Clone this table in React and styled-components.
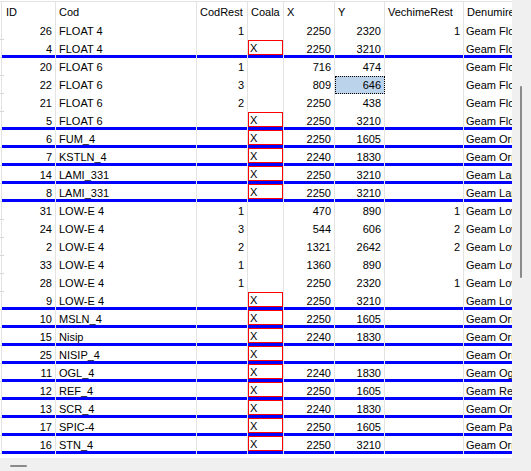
import React from 'react';
import styled, { createGlobalStyle } from 'styled-components';

const Global = createGlobalStyle`
  html, body { margin: 0; padding: 0; background: #fff; }
  body {
    font-family: "Liberation Sans", Arial, sans-serif;
    font-size: 11px;
    color: #000;
  }
`;

const COLS = '54px 141px 51px 36px 51px 50px 79px 70px';
const GRID = '#e3e3e3';

const Frame = styled.div`
  width: 531px;
  height: 471px;
  display: grid;
  grid-template-columns: 512px 19px;
  grid-template-rows: 458px 13px;
  background: #fff;
  overflow: hidden;
`;

const View = styled.div`
  overflow: hidden;
  background: #fff;
`;

const HeaderRow = styled.div`
  display: grid;
  grid-template-columns: ${COLS};
  height: 20px;
  margin-top: 1px;
  padding-left: 2px;
  border-top: 1px solid ${GRID};
  background: linear-gradient(${GRID}, ${GRID}) 1px 0 / 1px 100% no-repeat;
`;

const HeaderCell = styled.div`
  border-right: 1px solid ${GRID};
  padding-left: ${(p) => (p.$first ? '4px' : '3px')};
  line-height: 20px;
  white-space: nowrap;
  overflow: hidden;
`;

const Row = styled.div`
  display: grid;
  grid-template-columns: ${COLS};
  height: 18px;
  padding-left: 2px;
  background:
    linear-gradient(${GRID}, ${GRID}) 1px 0 / 1px 100% no-repeat,
    linear-gradient(#d4d4d4, #d4d4d4) 0 100% / 4px 1px no-repeat;
`;

const Cell = styled.div`
  height: 18px;
  line-height: 18px;
  border-right: 1px solid ${GRID};
  padding: ${(p) => (p.$flush ? '0' : p.$right ? '0 3px 0 0' : '0 0 0 3px')};
  text-align: ${(p) => (p.$right ? 'right' : 'left')};
  white-space: nowrap;
  overflow: hidden;
  background: ${(p) => (p.$sel ? '#bcd3ec' : 'transparent')};
  outline: ${(p) => (p.$sel ? '1px dotted #000' : 'none')};
  outline-offset: -1px;
  box-shadow: ${(p) => (p.$mark ? 'inset 0 -3px 0 #0000ff' : 'none')};
`;

const LastCell = styled(Cell)`
  border-right: none;
  padding-left: 2px;
`;

const Mark = styled.div`
  height: 15px;
  box-sizing: border-box;
  border: 1px solid #f00;
  line-height: 15px;
  padding-left: 1px;
`;

const VScroll = styled.div`
  background: #f0f0f0;
  padding: 86px 0 0 8px;
`;

const VThumb = styled.div`
  width: 2px;
  height: 192px;
  background: #8a8a8a;
  border-radius: 1px;
`;

const HScroll = styled.div`
  grid-column: 1 / span 2;
  background: #f0f0f0;
  padding: 7px 0 0 10px;
`;

const HThumb = styled.div`
  width: 17px;
  height: 2px;
  background: #8a8a8a;
  border-radius: 1px;
`;

const headers = ['ID', 'Cod', 'CodRest', 'Coala', 'X', 'Y', 'VechimeRest', 'Denumire'];

const rows = [
  [26, 'FLOAT 4', 1, false, 2250, 2320, 1, 'Geam Float'],
  [4, 'FLOAT 4', '', true, 2250, 3210, '', 'Geam Float'],
  [20, 'FLOAT 6', 1, false, 716, 474, '', 'Geam Float'],
  [22, 'FLOAT 6', 3, false, 809, 646, '', 'Geam Float', true],
  [21, 'FLOAT 6', 2, false, 2250, 438, '', 'Geam Float'],
  [5, 'FLOAT 6', '', true, 2250, 3210, '', 'Geam Float'],
  [6, 'FUM_4', '', true, 2250, 1605, '', 'Geam Ornament'],
  [7, 'KSTLN_4', '', true, 2240, 1830, '', 'Geam Ornament'],
  [14, 'LAMI_331', '', true, 2250, 3210, '', 'Geam Laminat'],
  [8, 'LAMI_331', '', true, 2250, 3210, '', 'Geam Laminat'],
  [31, 'LOW-E 4', 1, false, 470, 890, 1, 'Geam Low-E'],
  [24, 'LOW-E 4', 3, false, 544, 606, 2, 'Geam Low-E'],
  [2, 'LOW-E 4', 2, false, 1321, 2642, 2, 'Geam Low-E'],
  [33, 'LOW-E 4', 1, false, 1360, 890, '', 'Geam Low-E'],
  [28, 'LOW-E 4', 1, false, 2250, 2320, 1, 'Geam Low-E'],
  [9, 'LOW-E 4', '', true, 2250, 3210, '', 'Geam Low-E'],
  [10, 'MSLN_4', '', true, 2250, 1605, '', 'Geam Ornament'],
  [15, 'Nisip', '', true, 2240, 1830, '', 'Geam Ornament'],
  [25, 'NISIP_4', '', true, '', '', '', 'Geam Ornament'],
  [11, 'OGL_4', '', true, 2240, 1830, '', 'Geam Oglinda'],
  [12, 'REF_4', '', true, 2250, 1605, '', 'Geam Reflectant'],
  [13, 'SCR_4', '', true, 2240, 1830, '', 'Geam Ornament'],
  [17, 'SPIC-4', '', true, 2250, 1605, '', 'Geam Parsol'],
  [16, 'STN_4', '', true, 2250, 3210, '', 'Geam Ornament'],
];

export default function App() {
  return (
    <>
      <Global />
      <Frame>
        <View>
          <HeaderRow>
            {headers.map((h, i) => (
              <HeaderCell key={h} $first={i === 0}>{h}</HeaderCell>
            ))}
          </HeaderRow>
          {rows.map(([id, cod, rest, coala, x, y, vech, den, sel], i) => (
            <Row key={i}>
              <Cell $right $mark={coala}>{id}</Cell>
              <Cell $mark={coala}>{cod}</Cell>
              <Cell $right $mark={coala}>{rest}</Cell>
              <Cell $flush $mark={coala}>{coala ? <Mark>X</Mark> : null}</Cell>
              <Cell $right $mark={coala}>{x}</Cell>
              <Cell $right $mark={coala} $sel={sel}>{y}</Cell>
              <Cell $right $mark={coala}>{vech}</Cell>
              <LastCell $mark={coala}>{den}</LastCell>
            </Row>
          ))}
        </View>
        <VScroll>
          <VThumb />
        </VScroll>
        <HScroll>
          <HThumb />
        </HScroll>
      </Frame>
    </>
  );
}
